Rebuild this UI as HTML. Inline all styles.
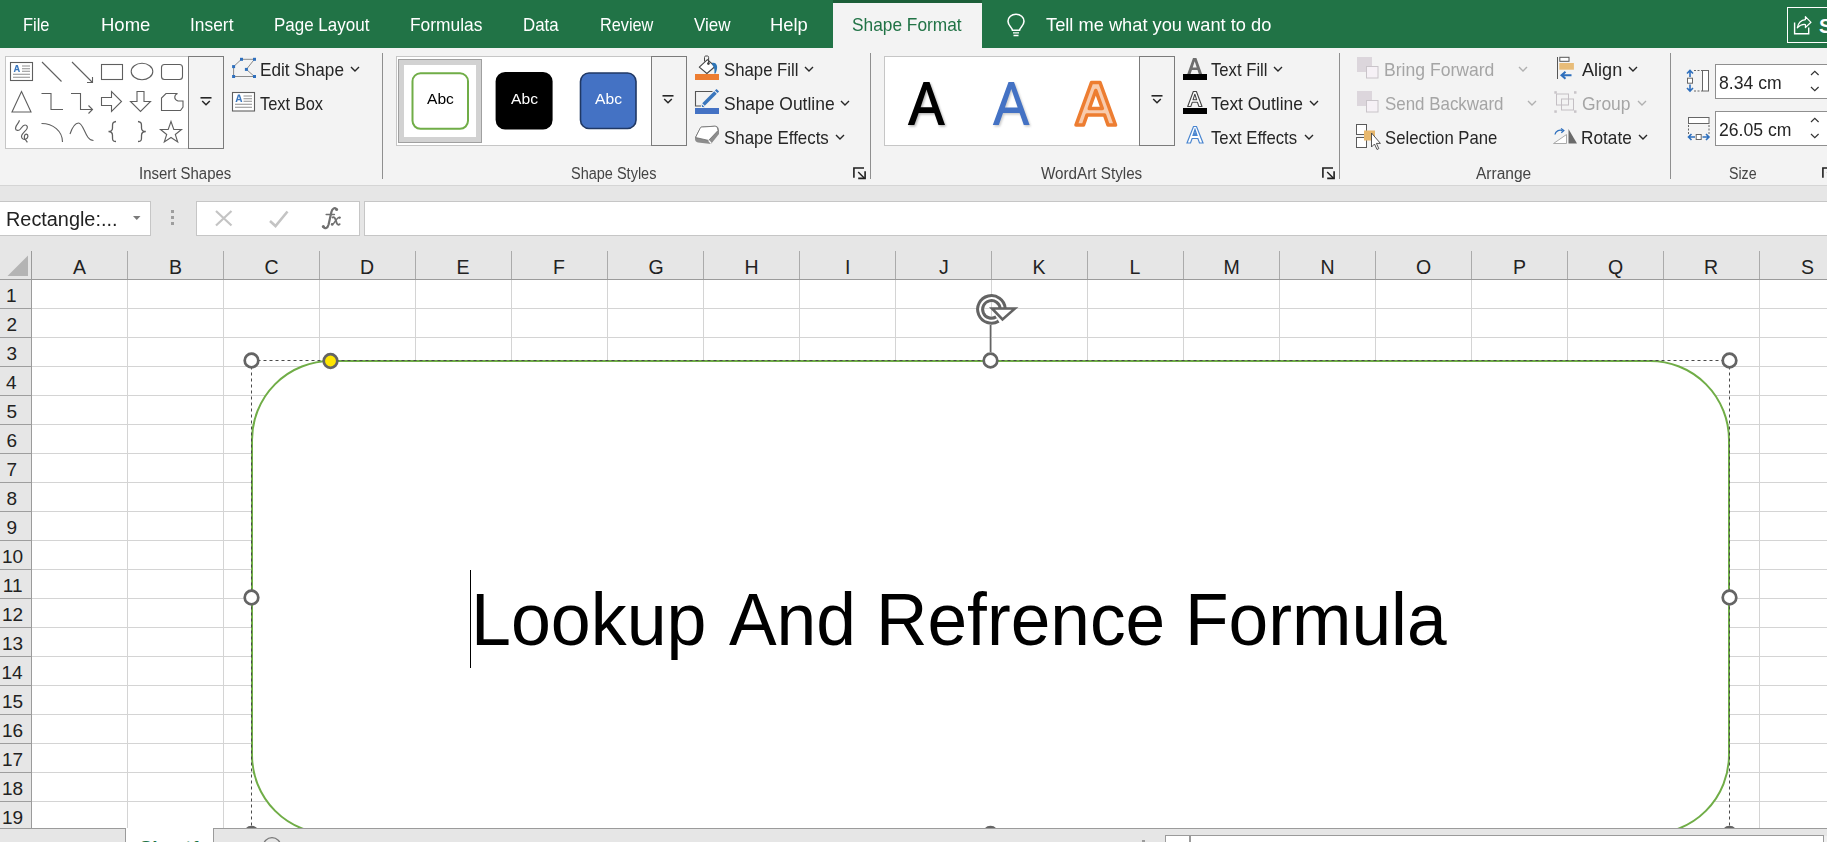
<!DOCTYPE html>
<html><head><meta charset="utf-8"><style>
html,body{margin:0;padding:0;}
body{width:1827px;height:842px;overflow:hidden;position:relative;background:#fff;font-family:"Liberation Sans", sans-serif;}
.a{position:absolute;box-sizing:border-box;}
.t{position:absolute;white-space:nowrap;transform-origin:0 0;}
svg{position:absolute;overflow:visible;}
</style></head><body>
<div class="a" style="left:0px;top:0px;width:1827px;height:48px;background:#217346"></div><div class="a" style="left:833px;top:0px;width:149px;height:3px;background:#1b5e38"></div><div class="a" style="left:833px;top:3px;width:149px;height:45px;background:#f3f3f3"></div><svg style="left:1000px;top:8px" width="32" height="34" viewBox="0 0 32 34"><g fill="none" stroke="#fff" stroke-width="1.6" transform="translate(0,3.6) scale(1,0.87)">
<path d="M12.5 21.5 C12 18 8 16 8 11 A8 8 0 0 1 24 11 C24 16 20 18 19.5 21.5 Z"/>
<path d="M13 24.5 H19 M13.5 27.5 H18.5"/></g></svg><div class="a" style="left:1787px;top:7px;width:60px;height:36px;border:1.3px solid #ffffff"></div><svg style="left:1790px;top:12px" width="28" height="26" viewBox="0 0 28 26"><g fill="none" stroke="#fff" stroke-width="1.4">
<path d="M4.6 10.5 V21.7 H18.7 V15.5"/>
<path d="M7.3 15.8 C8.3 10.5 11.5 8 15.4 7.6 V4.6 L21 10.3 L15.4 15.5 V12.5 C12 12 9.5 13.5 7.3 15.8 Z" stroke-width="1.2" stroke-linejoin="round"/></g></svg><div class="a" style="left:0px;top:48px;width:1827px;height:137px;background:#f3f3f3"></div><div class="a" style="left:0px;top:185px;width:1827px;height:1px;background:#d5d5d5"></div><div class="a" style="left:0px;top:186px;width:1827px;height:65px;background:#e6e6e6"></div><div class="a" style="left:382px;top:53px;width:1px;height:126px;background:#8f8f8f"></div><div class="a" style="left:870px;top:53px;width:1px;height:126px;background:#8f8f8f"></div><div class="a" style="left:1339px;top:53px;width:1px;height:126px;background:#8f8f8f"></div><div class="a" style="left:1670px;top:53px;width:1px;height:126px;background:#8f8f8f"></div><svg style="left:852.5px;top:167px" width="14" height="13" viewBox="0 0 14 13"><g fill="none" stroke="#1f1f1f" stroke-width="1.6"><path d="M0.9 10.7 V1 H11"/><path d="M5.2 4.9 L11.2 10.9" stroke-width="1.4"/><path d="M12.1 4.2 V11.4 H5.2"/></g></svg><svg style="left:1321.5px;top:167px" width="14" height="13" viewBox="0 0 14 13"><g fill="none" stroke="#1f1f1f" stroke-width="1.6"><path d="M0.9 10.7 V1 H11"/><path d="M5.2 4.9 L11.2 10.9" stroke-width="1.4"/><path d="M12.1 4.2 V11.4 H5.2"/></g></svg><svg style="left:1821.5px;top:167px" width="14" height="13" viewBox="0 0 14 13"><g fill="none" stroke="#1f1f1f" stroke-width="1.6"><path d="M0.9 10.7 V1 H11"/><path d="M5.2 4.9 L11.2 10.9" stroke-width="1.4"/><path d="M12.1 4.2 V11.4 H5.2"/></g></svg><div class="a" style="left:5px;top:56px;width:184px;height:93px;background:#fff;border:1px solid #c6c6c6;border-right:none"></div><div class="a" style="left:188px;top:56px;width:36px;height:93px;background:#f3f3f3;border:1px solid #7b7b7b"></div><svg style="left:199.5px;top:96.5px" width="12" height="10" viewBox="0 0 12 10"><rect x="0.5" y="0" width="11" height="1.6" fill="#262626"/><path d="M2.2 4 L6 7.8 L9.8 4" fill="none" stroke="#262626" stroke-width="1.5"/></svg><svg style="left:0px;top:0px" width="230" height="160" viewBox="0 0 230 160"><g fill="none" stroke="#5f5f5f" stroke-width="1.1">
<rect x="10.5" y="62.5" width="22" height="18"/>
<path d="M42 62 L61.5 81.5"/>
<path d="M72 62 L92.5 82.5 M92.5 77 V82.5 H87"/>
<rect x="101.5" y="64.5" width="21" height="15"/>
<ellipse cx="142" cy="71.5" rx="10.8" ry="8.2"/>
<rect x="161.5" y="64.5" width="21" height="15" rx="3"/>
<path d="M21.5 91.5 L31 112 H12 Z"/>
<path d="M41.5 93.5 H51 V109.5 H63"/>
<path d="M71 93.5 H80.5 V109.5 H92.5 M88.5 105.5 L92.5 109.5 L88.5 113.5"/>
<path d="M101.5 97.5 H111.5 V91.5 L121.5 101.5 L111.5 111.5 V105.5 H101.5 Z"/>
<path d="M137 91.5 H144 V101.5 H150.5 L140.5 111.5 L130.5 101.5 H137 Z"/>
<path d="M166 93.5 H177.5 C174 95 173.5 99.5 178 101 H183 V107 L180.5 110.5 H161.5 V98 Z"/>
<path d="M19.4 120.3 C19.4 123 15.5 125 15.5 128.2 C15.5 131 19 131 20.5 129 C22 127 23 125 25 125 C27.5 125 28 127.5 26.5 129.5 C25 131.5 21.5 134 21.5 136.5 C21.5 139 24 139.8 26 139 C28.5 138 28.5 134.5 26.3 134.2 C24.5 134 24 137 24.6 138.5 L27.4 142.4" stroke-width="1.2"/>
<path d="M41.5 123.5 C53 123.5 62.5 131 62.5 142"/>
<path d="M70 134 C72 128 75 123 78.5 123 C84 123 85 140.5 93.5 140.5"/>
<path d="M116 121.5 C112 122 112.5 124 112.5 128 C112.5 130.5 111 131.5 108.5 131.5 C111 131.5 112.5 132.5 112.5 135.5 C112.5 139.5 112 141.5 116 141.5" stroke-width="1.3"/>
<path d="M138 121.5 C142 122 141.5 124 141.5 128 C141.5 130.5 143 131.5 145.8 131.5 C143 131.5 141.5 132.5 141.5 135.5 C141.5 139.5 142 141.5 138 141.5" stroke-width="1.3"/>
<path d="M171 121.5 L173.8 129.5 L181.5 129.5 L175.3 134.5 L177.7 142 L171 137.5 L164.3 142 L166.7 134.5 L160.5 129.5 L168.2 129.5 Z"/>
</g>
<g stroke="#8f8f8f" stroke-width="1.1"><path d="M22 66 H30 M22 68.7 H30 M22 71.3 H30 M13 74.3 H30 M13 77.2 H30"/></g>
<path d="M13.7 72 L15.9 65 H17.8 L20 72 H18.5 L18 70.3 H15.7 L15.2 72 Z M16.1 69 H17.6 L16.85 66.5 Z" fill="#3a76bd"/></svg><svg style="left:228px;top:54px" width="32" height="30" viewBox="0 0 32 30"><g fill="none" stroke="#8a8a8a" stroke-width="1"><path d="M5.6 12.6 L13.4 5.3 H26.4 L18.4 15.4 L26.4 22.5 H5.6 Z"/></g>
<g fill="#2e6fbd"><rect x="12" y="3.8" width="3" height="3"/><rect x="25" y="3.8" width="3" height="3"/><rect x="4.1" y="11.1" width="3" height="3"/><rect x="16.9" y="13.9" width="3" height="3"/><rect x="4.1" y="21" width="3" height="3"/><rect x="25" y="21" width="3" height="3"/></g></svg><svg style="left:349.5px;top:66px" width="10" height="6" viewBox="0 0 10 6"><path d="M1 1 L5.0 5 L9 1" fill="none" stroke="#262626" stroke-width="1.4"/></svg><svg style="left:228px;top:88px" width="32" height="28" viewBox="0 0 32 28"><rect x="4.5" y="4.5" width="22" height="18.5" fill="#fff" stroke="#5f5f5f" stroke-width="1.1"/>
<g stroke="#8f8f8f" stroke-width="1.1"><path d="M15.5 8 H24 M15.5 10.7 H24 M15.5 13.3 H24 M7 16.3 H24 M7 19.2 H24"/></g>
<path d="M7.5 14 L9.9 6.5 H11.9 L14.3 14 H12.7 L12.2 12.2 H9.6 L9.1 14 Z M10 11 H11.8 L10.9 8 Z" fill="#3a76bd"/></svg><div class="a" style="left:396px;top:56px;width:256px;height:90px;background:#fff;border:1px solid #c6c6c6;border-right:none"></div><div class="a" style="left:651px;top:56px;width:36px;height:90px;background:#f3f3f3;border:1px solid #7b7b7b"></div><svg style="left:662px;top:95px" width="12" height="10" viewBox="0 0 12 10"><rect x="0.5" y="0" width="11" height="1.6" fill="#262626"/><path d="M2.2 4 L6 7.8 L9.8 4" fill="none" stroke="#262626" stroke-width="1.5"/></svg><div class="a" style="left:398px;top:59px;width:84px;height:84px;background:#fff;border:1px solid #a0a0a0;box-shadow:inset 0 0 0 5px #d2d2d2"></div><svg style="left:405px;top:66px" width="240" height="70" viewBox="0 0 240 70"><rect x="7.5" y="7.3" width="55.5" height="55.5" rx="8" fill="#fff" stroke="#70ad47" stroke-width="2"/>
<rect x="90.6" y="6" width="57" height="57.5" rx="9.5" fill="#000"/>
<rect x="175.5" y="7" width="55.5" height="55.5" rx="8.5" fill="#4472c4" stroke="#203864" stroke-width="1.6"/></svg><svg style="left:692px;top:52px" width="32" height="96" viewBox="0 0 32 96"><path d="M7.3 15.1 L15.4 7.6 L23 14.5 L14.9 21.5 Z" fill="#fff" stroke="#444" stroke-width="1.1" stroke-linejoin="round"/>
<path d="M12.5 9.5 V5.5 C12.5 4.5 13 4 14 4 H15.5 C16.3 4 16.6 4.5 16.6 5.5 V11" fill="none" stroke="#444" stroke-width="1"/><circle cx="16.4" cy="11.6" r="1.4" fill="#444"/>
<path d="M19.5 11 C22 10 24.5 11 25 14 C25.5 16.5 24.5 19 23.5 21.5 L22.3 21.5 C22.8 18.5 22.5 16 21 14 Z" fill="#2e75b6"/>
<rect x="3" y="22" width="24" height="6" fill="#ed7d31"/>
<path d="M3.5 54.5 V39.5 H20.5 M3.5 54 H9" fill="none" stroke="#555" stroke-width="1.1"/>
<path d="M11.5 52.5 L23.5 40.5" stroke="#3a76bd" stroke-width="3.6"/>
<path d="M24.2 39.8 L25.8 38.2" stroke="#3a76bd" stroke-width="3.6"/>
<path d="M9.7 52.3 L10 55 L12.7 55.3 Z" fill="#3a76bd"/>
<rect x="3" y="56" width="24" height="6" fill="#4472c4"/>
<path d="M3 85.5 L8 76 C8.5 75 9 74.5 10.5 74.5 L23 73.8 C24.5 73.8 25.5 74.5 26.5 76 L27 79 L27 82 L19 92 L6 90.5 C4 90 3 89 3 87 Z" fill="#8d8d8d"/>
<path d="M3.5 85.5 L8 76.5 C8.5 75.5 9 75 10.5 75 L22.5 74.2 C24 74.2 25 74.7 25.5 76 L26 78.5 L16.6 88.4 Z" fill="#fff" stroke="#6a6a6a" stroke-width="0.8" stroke-linejoin="round"/>
<path d="M16.6 88.4 L19.3 91.5" stroke="#fff" stroke-width="1.3"/></svg><svg style="left:803.5px;top:66px" width="10" height="6" viewBox="0 0 10 6"><path d="M1 1 L5.0 5 L9 1" fill="none" stroke="#262626" stroke-width="1.4"/></svg><svg style="left:839.5px;top:100px" width="10" height="6" viewBox="0 0 10 6"><path d="M1 1 L5.0 5 L9 1" fill="none" stroke="#262626" stroke-width="1.4"/></svg><svg style="left:834.5px;top:134px" width="10" height="6" viewBox="0 0 10 6"><path d="M1 1 L5.0 5 L9 1" fill="none" stroke="#262626" stroke-width="1.4"/></svg><div class="a" style="left:884px;top:56px;width:256px;height:90px;background:#fff;border:1px solid #c6c6c6;border-right:none"></div><div class="a" style="left:1139px;top:56px;width:36px;height:90px;background:#f3f3f3;border:1px solid #7b7b7b"></div><svg style="left:1150.5px;top:95px" width="12" height="10" viewBox="0 0 12 10"><rect x="0.5" y="0" width="11" height="1.6" fill="#262626"/><path d="M2.2 4 L6 7.8 L9.8 4" fill="none" stroke="#262626" stroke-width="1.5"/></svg><svg style="left:895px;top:70px" width="240" height="70" viewBox="0 0 240 70"><defs><filter id="sh" x="-20%" y="-20%" width="140%" height="140%"><feGaussianBlur stdDeviation="1"/></filter></defs>
<g transform="translate(1.2,1.5)" opacity="0.45" filter="url(#sh)"><path d="M12.8 55 L28.5 12 H34.5 L50 55 H43.5 L39.3 43 H23.7 L19.3 55 Z M25.6 37.3 H37.4 L31.5 19.5 Z" fill="#555"/></g>
<path d="M12.8 55 L28.5 12 H34.5 L50 55 H43.5 L39.3 43 H23.7 L19.3 55 Z M25.6 37.3 H37.4 L31.5 19.5 Z" fill="#000"/>
<g transform="translate(1.2,1.5)" opacity="0.35" filter="url(#sh)"><path d="M97.8 55 L113.5 12 H119 L134.6 55 H128.8 L124.6 43 H108 L103.8 55 Z M109.9 37.6 H122.7 L116.3 19 Z" fill="#666"/></g>
<path d="M97.8 55 L113.5 12 H119 L134.6 55 H128.8 L124.6 43 H108 L103.8 55 Z M109.9 37.6 H122.7 L116.3 19 Z" fill="#4472c4"/>
<path d="M181 55 L196.5 12.5 H205 L220.5 55 H213 L209.5 45 H192 L188.5 55 Z M194.3 38.5 H207.3 L200.8 20.5 Z" fill="#f8cbad" stroke="#ed7d31" stroke-width="3.6" stroke-linejoin="round"/></svg><svg style="left:1178px;top:54px" width="34" height="96" viewBox="0 0 34 96"><path d="M9.3 20 L15 4 H18.4 L24.1 20 H20.8 L19.5 16 H13.9 L12.6 20 Z M14.7 13.4 H18.7 L16.7 7.3 Z" fill="#6e6e6e"/>
<rect x="5" y="20" width="24" height="6" fill="#000"/>
<path d="M9.7 52.5 L15.3 37.5 H18.4 L24 52.5 H20.9 L19.5 48.3 H14.2 L12.8 52.5 Z M15 45.8 H18.7 L16.85 40.2 Z" fill="#fff" stroke="#444" stroke-width="1.1" stroke-linejoin="round"/>
<rect x="5" y="54" width="24" height="6" fill="#000"/>
<path d="M9 89 L15.5 72.5 H18.5 L25 89 H21.5 L19.9 84.5 H14.1 L12.5 89 Z M15 81.5 H19 L17 75.5 Z" fill="#fff" stroke="#4a86d0" stroke-width="1.2"/>
<path d="M15.6 81 L17 77 L18.4 81 Z" fill="#4a86d0"/></svg><svg style="left:1273px;top:66px" width="10" height="6" viewBox="0 0 10 6"><path d="M1 1 L5.0 5 L9 1" fill="none" stroke="#262626" stroke-width="1.4"/></svg><svg style="left:1308.5px;top:100px" width="10" height="6" viewBox="0 0 10 6"><path d="M1 1 L5.0 5 L9 1" fill="none" stroke="#262626" stroke-width="1.4"/></svg><svg style="left:1303.5px;top:134px" width="10" height="6" viewBox="0 0 10 6"><path d="M1 1 L5.0 5 L9 1" fill="none" stroke="#262626" stroke-width="1.4"/></svg><svg style="left:1350px;top:52px" width="36" height="100" viewBox="0 0 36 100"><rect x="7" y="5" width="15" height="15" fill="#dcd6dc"/>
<rect x="16.5" y="14.5" width="11.5" height="11.5" fill="#f6f1f6" stroke="#c9c4c9" stroke-width="1"/>
<rect x="7" y="39" width="15" height="15" fill="#dcd6dc"/>
<rect x="16.5" y="48.5" width="11.5" height="11.5" fill="#f6f1f6" stroke="#c9c4c9" stroke-width="1"/>
<rect x="6.5" y="72.5" width="10" height="10" fill="#fff" stroke="#5a5a5a" stroke-width="1"/>
<rect x="6.5" y="85.5" width="10" height="10" fill="#fff" stroke="#5a5a5a" stroke-width="1"/>
<rect x="14" y="78.5" width="11" height="10" fill="#e8b86d"/>
<path d="M21.5 81 V95 L24.5 92 L27 97.5 L28.8 96.6 L26.4 91.4 L30.4 91.4 Z" fill="#fff" stroke="#444" stroke-width="0.9"/></svg><svg style="left:1517.5px;top:66px" width="10" height="6" viewBox="0 0 10 6"><path d="M1 1 L5.0 5 L9 1" fill="none" stroke="#b0b0b0" stroke-width="1.4"/></svg><svg style="left:1526.5px;top:100px" width="10" height="6" viewBox="0 0 10 6"><path d="M1 1 L5.0 5 L9 1" fill="none" stroke="#b0b0b0" stroke-width="1.4"/></svg><svg style="left:1550px;top:52px" width="30" height="100" viewBox="0 0 30 100"><path d="M7.5 5 V27" stroke="#555" stroke-width="1"/>
<rect x="9.8" y="5.3" width="9.2" height="4" fill="#fff" stroke="#555" stroke-width="1"/>
<rect x="9.3" y="11" width="14.6" height="6.7" fill="#e8bc78"/>
<path d="M21.5 23.3 H12 M15.5 19.8 L11.5 23.3 L15.5 26.8" fill="none" stroke="#2e6fbd" stroke-width="2"/>
<g fill="none" stroke="#c4bfc4" stroke-width="1"><rect x="6.5" y="42" width="12" height="11"/><rect x="11.5" y="47" width="12" height="11"/></g>
<g fill="#c8c4c8"><rect x="4.3" y="39.2" width="2.5" height="2.5"/><rect x="24" y="39.2" width="2.5" height="2.5"/><rect x="4.3" y="58.3" width="2.5" height="2.5"/><rect x="24" y="58.3" width="2.5" height="2.5"/></g>
<path d="M3.5 91.5 L16.5 82.5 V91.5 Z" fill="#fff" stroke="#aaa" stroke-width="1"/>
<path d="M18.5 91.5 V77 L27 91.5 Z" fill="#6a6a6a"/>
<path d="M5 82.5 C5.5 79 9 77.5 12.5 78.5" fill="none" stroke="#2e6fbd" stroke-width="1.3"/><path d="M11 76.5 L13.8 78.6 L11.3 80.8" fill="none" stroke="#2e6fbd" stroke-width="1.3"/></svg><svg style="left:1628px;top:66px" width="10" height="6" viewBox="0 0 10 6"><path d="M1 1 L5.0 5 L9 1" fill="none" stroke="#262626" stroke-width="1.4"/></svg><svg style="left:1637px;top:100px" width="10" height="6" viewBox="0 0 10 6"><path d="M1 1 L5.0 5 L9 1" fill="none" stroke="#b0b0b0" stroke-width="1.4"/></svg><svg style="left:1638px;top:134px" width="10" height="6" viewBox="0 0 10 6"><path d="M1 1 L5.0 5 L9 1" fill="none" stroke="#262626" stroke-width="1.4"/></svg><svg style="left:1684px;top:66px" width="30" height="78" viewBox="0 0 30 78"><rect x="18.5" y="4.5" width="6" height="20.5" fill="#fff" stroke="#666" stroke-width="1"/>
<path d="M10 4.5 H18 M10 25 H18" stroke="#666" stroke-width="1" stroke-dasharray="2 1.5"/>
<rect x="3.5" y="12.2" width="5" height="5" fill="#fff" stroke="#666" stroke-width="1"/>
<path d="M6 4.5 V11 M6 18.5 V25 M3 7.5 L6 4.5 L9 7.5 M3 22 L6 25 L9 22" fill="none" stroke="#2e6fbd" stroke-width="1.6"/>
<rect x="4.5" y="51.5" width="20.5" height="6" fill="#fff" stroke="#666" stroke-width="1"/>
<path d="M4.5 59 V68 M25 59 V68" stroke="#666" stroke-width="1" stroke-dasharray="2 1.5"/>
<rect x="12.2" y="68.5" width="5" height="5" fill="#fff" stroke="#666" stroke-width="1"/>
<path d="M4.5 71 H11 M18.5 71 H25 M7.5 68 L4.5 71 L7.5 74 M22 68 L25 71 L22 74" fill="none" stroke="#2e6fbd" stroke-width="1.6"/></svg><div class="a" style="left:1715px;top:64px;width:140px;height:35px;background:#fff;border:1px solid #8f8f8f"></div><div class="a" style="left:1715px;top:111px;width:140px;height:35px;background:#fff;border:1px solid #8f8f8f"></div><svg style="left:1809px;top:70px" width="12" height="22" viewBox="0 0 12 22"><path d="M2 5 L5.8 1.3 L9.6 5 M2 17 L5.8 20.7 L9.6 17" fill="none" stroke="#333" stroke-width="1.2"/></svg><svg style="left:1809px;top:117px" width="12" height="22" viewBox="0 0 12 22"><path d="M2 5 L5.8 1.3 L9.6 5 M2 17 L5.8 20.7 L9.6 17" fill="none" stroke="#333" stroke-width="1.2"/></svg><div class="a" style="left:-1px;top:201px;width:152px;height:35px;background:#fff;border:1px solid #c6c6c6"></div><svg style="left:131px;top:214px" width="12" height="8" viewBox="0 0 12 8"><path d="M2 2 H9.5 L5.75 6 Z" fill="#7a7a7a"/></svg><div class="a" style="left:171px;top:210px;width:3px;height:3px;background:#9e9e9e"></div><div class="a" style="left:171px;top:216px;width:3px;height:3px;background:#9e9e9e"></div><div class="a" style="left:171px;top:222px;width:3px;height:3px;background:#9e9e9e"></div><div class="a" style="left:196px;top:201px;width:164px;height:35px;background:#fff;border:1px solid #c6c6c6"></div><svg style="left:210px;top:205px" width="140" height="30" viewBox="0 0 140 30"><path d="M6 6 L21.5 20.5 M21.5 6 L6 20.5" stroke="#c4c4c4" stroke-width="2.2"/>
<path d="M60 16 L65.5 21 L77.5 6.5" fill="none" stroke="#c4c4c4" stroke-width="2.6"/></svg><svg style="left:310px;top:200px" width="40" height="36" viewBox="0 0 40 36"><g transform="translate(-310,-200)" fill="none" stroke="#707070" stroke-linecap="round">
<path d="M323.5 227 C325 229 327.6 228.5 328.6 224.5 L331.4 212 C332.2 208.5 334.5 207.5 336.3 208.8" stroke-width="2.2"/>
<path d="M326.2 214.4 H334.4" stroke-width="1.5"/>
<path d="M332.6 217.4 C334.2 216.8 335 217.8 335.6 219.8 L336.8 223.2 C337.4 224.9 338.6 225 339.6 224.2" stroke-width="1.9"/>
<path d="M339.6 217.6 C338.4 217 337.4 218 336.2 219.8 L334 223 C333.2 224.4 332.4 224.6 331.6 224.2" stroke-width="1.5"/>
</g><g fill="#707070"><circle cx="26.6" cy="9.6" r="1.5"/><circle cx="13.3" cy="26.5" r="1.5"/><circle cx="29.6" cy="17.6" r="1.2"/><circle cx="22.2" cy="24.4" r="1.3"/></g></svg><div class="a" style="left:364px;top:201px;width:1480px;height:35px;background:#fff;border:1px solid #c6c6c6"></div><div class="a" style="left:0px;top:251px;width:1827px;height:28px;background:#e6e6e6"></div><div class="a" style="left:0px;top:279px;width:1827px;height:1px;background:#9b9b9b"></div><svg style="left:0px;top:250px" width="32" height="30" viewBox="0 0 32 30"><path d="M28 5.5 V26 H7.5 Z" fill="#b4b4b4"/></svg><div class="a" style="left:31px;top:251px;width:1px;height:28px;background:#9b9b9b"></div><div class="a" style="left:127px;top:251px;width:1px;height:28px;background:#ababab"></div><div class="a" style="left:223px;top:251px;width:1px;height:28px;background:#ababab"></div><div class="a" style="left:319px;top:251px;width:1px;height:28px;background:#ababab"></div><div class="a" style="left:415px;top:251px;width:1px;height:28px;background:#ababab"></div><div class="a" style="left:511px;top:251px;width:1px;height:28px;background:#ababab"></div><div class="a" style="left:607px;top:251px;width:1px;height:28px;background:#ababab"></div><div class="a" style="left:703px;top:251px;width:1px;height:28px;background:#ababab"></div><div class="a" style="left:799px;top:251px;width:1px;height:28px;background:#ababab"></div><div class="a" style="left:895px;top:251px;width:1px;height:28px;background:#ababab"></div><div class="a" style="left:991px;top:251px;width:1px;height:28px;background:#ababab"></div><div class="a" style="left:1087px;top:251px;width:1px;height:28px;background:#ababab"></div><div class="a" style="left:1183px;top:251px;width:1px;height:28px;background:#ababab"></div><div class="a" style="left:1279px;top:251px;width:1px;height:28px;background:#ababab"></div><div class="a" style="left:1375px;top:251px;width:1px;height:28px;background:#ababab"></div><div class="a" style="left:1471px;top:251px;width:1px;height:28px;background:#ababab"></div><div class="a" style="left:1567px;top:251px;width:1px;height:28px;background:#ababab"></div><div class="a" style="left:1663px;top:251px;width:1px;height:28px;background:#ababab"></div><div class="a" style="left:1759px;top:251px;width:1px;height:28px;background:#ababab"></div><div class="a" style="left:1855px;top:251px;width:1px;height:28px;background:#ababab"></div><div class="a" style="left:0px;top:280px;width:31px;height:548px;background:#e6e6e6"></div><div class="a" style="left:31px;top:251px;width:1px;height:577px;background:#9b9b9b"></div><div class="a" style="left:127px;top:280px;width:1px;height:548px;background:#d4d4d4"></div><div class="a" style="left:223px;top:280px;width:1px;height:548px;background:#d4d4d4"></div><div class="a" style="left:319px;top:280px;width:1px;height:548px;background:#d4d4d4"></div><div class="a" style="left:415px;top:280px;width:1px;height:548px;background:#d4d4d4"></div><div class="a" style="left:511px;top:280px;width:1px;height:548px;background:#d4d4d4"></div><div class="a" style="left:607px;top:280px;width:1px;height:548px;background:#d4d4d4"></div><div class="a" style="left:703px;top:280px;width:1px;height:548px;background:#d4d4d4"></div><div class="a" style="left:799px;top:280px;width:1px;height:548px;background:#d4d4d4"></div><div class="a" style="left:895px;top:280px;width:1px;height:548px;background:#d4d4d4"></div><div class="a" style="left:991px;top:280px;width:1px;height:548px;background:#d4d4d4"></div><div class="a" style="left:1087px;top:280px;width:1px;height:548px;background:#d4d4d4"></div><div class="a" style="left:1183px;top:280px;width:1px;height:548px;background:#d4d4d4"></div><div class="a" style="left:1279px;top:280px;width:1px;height:548px;background:#d4d4d4"></div><div class="a" style="left:1375px;top:280px;width:1px;height:548px;background:#d4d4d4"></div><div class="a" style="left:1471px;top:280px;width:1px;height:548px;background:#d4d4d4"></div><div class="a" style="left:1567px;top:280px;width:1px;height:548px;background:#d4d4d4"></div><div class="a" style="left:1663px;top:280px;width:1px;height:548px;background:#d4d4d4"></div><div class="a" style="left:1759px;top:280px;width:1px;height:548px;background:#d4d4d4"></div><div class="a" style="left:1855px;top:280px;width:1px;height:548px;background:#d4d4d4"></div><div class="a" style="left:32px;top:308px;width:1795px;height:1px;background:#d4d4d4"></div><div class="a" style="left:0px;top:308px;width:31px;height:1px;background:#9e9e9e"></div><div class="a" style="left:32px;top:337px;width:1795px;height:1px;background:#d4d4d4"></div><div class="a" style="left:0px;top:337px;width:31px;height:1px;background:#9e9e9e"></div><div class="a" style="left:32px;top:366px;width:1795px;height:1px;background:#d4d4d4"></div><div class="a" style="left:0px;top:366px;width:31px;height:1px;background:#9e9e9e"></div><div class="a" style="left:32px;top:395px;width:1795px;height:1px;background:#d4d4d4"></div><div class="a" style="left:0px;top:395px;width:31px;height:1px;background:#9e9e9e"></div><div class="a" style="left:32px;top:424px;width:1795px;height:1px;background:#d4d4d4"></div><div class="a" style="left:0px;top:424px;width:31px;height:1px;background:#9e9e9e"></div><div class="a" style="left:32px;top:453px;width:1795px;height:1px;background:#d4d4d4"></div><div class="a" style="left:0px;top:453px;width:31px;height:1px;background:#9e9e9e"></div><div class="a" style="left:32px;top:482px;width:1795px;height:1px;background:#d4d4d4"></div><div class="a" style="left:0px;top:482px;width:31px;height:1px;background:#9e9e9e"></div><div class="a" style="left:32px;top:511px;width:1795px;height:1px;background:#d4d4d4"></div><div class="a" style="left:0px;top:511px;width:31px;height:1px;background:#9e9e9e"></div><div class="a" style="left:32px;top:540px;width:1795px;height:1px;background:#d4d4d4"></div><div class="a" style="left:0px;top:540px;width:31px;height:1px;background:#9e9e9e"></div><div class="a" style="left:32px;top:569px;width:1795px;height:1px;background:#d4d4d4"></div><div class="a" style="left:0px;top:569px;width:31px;height:1px;background:#9e9e9e"></div><div class="a" style="left:32px;top:598px;width:1795px;height:1px;background:#d4d4d4"></div><div class="a" style="left:0px;top:598px;width:31px;height:1px;background:#9e9e9e"></div><div class="a" style="left:32px;top:627px;width:1795px;height:1px;background:#d4d4d4"></div><div class="a" style="left:0px;top:627px;width:31px;height:1px;background:#9e9e9e"></div><div class="a" style="left:32px;top:656px;width:1795px;height:1px;background:#d4d4d4"></div><div class="a" style="left:0px;top:656px;width:31px;height:1px;background:#9e9e9e"></div><div class="a" style="left:32px;top:685px;width:1795px;height:1px;background:#d4d4d4"></div><div class="a" style="left:0px;top:685px;width:31px;height:1px;background:#9e9e9e"></div><div class="a" style="left:32px;top:714px;width:1795px;height:1px;background:#d4d4d4"></div><div class="a" style="left:0px;top:714px;width:31px;height:1px;background:#9e9e9e"></div><div class="a" style="left:32px;top:743px;width:1795px;height:1px;background:#d4d4d4"></div><div class="a" style="left:0px;top:743px;width:31px;height:1px;background:#9e9e9e"></div><div class="a" style="left:32px;top:772px;width:1795px;height:1px;background:#d4d4d4"></div><div class="a" style="left:0px;top:772px;width:31px;height:1px;background:#9e9e9e"></div><div class="a" style="left:32px;top:801px;width:1795px;height:1px;background:#d4d4d4"></div><div class="a" style="left:0px;top:801px;width:31px;height:1px;background:#9e9e9e"></div><svg style="left:0px;top:0px" width="1827" height="842" viewBox="0 0 1827 842"><rect x="252" y="361" width="1477" height="473" rx="79" ry="79" fill="#fff" stroke="#70ad47" stroke-width="2"/></svg>
<div class="t gen" style="left:22.72px;top:15.01px;font-size:18.6px;line-height:20.776px;color:#ffffff;transform:scaleX(0.8840);">File</div>
<div class="t gen" style="left:100.81px;top:15.01px;font-size:18.6px;line-height:20.776px;color:#ffffff;transform:scaleX(0.9947);">Home</div>
<div class="t gen" style="left:189.57px;top:15.01px;font-size:18.6px;line-height:20.776px;color:#ffffff;transform:scaleX(0.9345);">Insert</div>
<div class="t gen" style="left:273.89px;top:15.01px;font-size:18.6px;line-height:20.776px;color:#ffffff;transform:scaleX(0.9132);">Page Layout</div>
<div class="t gen" style="left:409.97px;top:15.01px;font-size:18.6px;line-height:20.776px;color:#ffffff;transform:scaleX(0.9345);">Formulas</div>
<div class="t gen" style="left:522.79px;top:15.01px;font-size:18.6px;line-height:20.776px;color:#ffffff;transform:scaleX(0.9066);">Data</div>
<div class="t gen" style="left:600.12px;top:15.01px;font-size:18.6px;line-height:20.776px;color:#ffffff;transform:scaleX(0.8755);">Review</div>
<div class="t gen" style="left:694.00px;top:15.01px;font-size:18.6px;line-height:20.776px;color:#ffffff;transform:scaleX(0.9127);">View</div>
<div class="t gen" style="left:770.01px;top:15.01px;font-size:18.6px;line-height:20.776px;color:#ffffff;transform:scaleX(0.9892);">Help</div>
<div class="t gen" style="left:851.50px;top:15.01px;font-size:18.6px;line-height:20.776px;color:#217346;transform:scaleX(0.9305);">Shape Format</div>
<div class="t gen" style="left:1045.80px;top:15.01px;font-size:18.6px;line-height:20.776px;color:#ffffff;transform:scaleX(0.9821);">Tell me what you want to do</div>
<div class="t gen" style="left:1819.10px;top:15.01px;font-size:20px;line-height:22.34px;color:#ffffff;font-weight:bold;">S</div>
<div class="t gen" style="left:138.75px;top:165.01px;font-size:15.8px;line-height:17.649px;color:#444444;transform:scaleX(0.9464);">Insert Shapes</div>
<div class="t gen" style="left:570.50px;top:165.01px;font-size:15.8px;line-height:17.649px;color:#444444;transform:scaleX(0.9175);">Shape Styles</div>
<div class="t gen" style="left:1040.60px;top:165.01px;font-size:15.8px;line-height:17.649px;color:#444444;transform:scaleX(0.9634);">WordArt Styles</div>
<div class="t gen" style="left:1476.40px;top:165.01px;font-size:15.8px;line-height:17.649px;color:#444444;transform:scaleX(0.9820);">Arrange</div>
<div class="t gen" style="left:1728.50px;top:165.01px;font-size:15.8px;line-height:17.649px;color:#444444;transform:scaleX(0.8984);">Size</div>
<div class="t gen" style="left:260.38px;top:60.01px;font-size:18.6px;line-height:20.776px;color:#262626;transform:scaleX(0.9227);">Edit Shape</div>
<div class="t gen" style="left:260.30px;top:94.01px;font-size:18.6px;line-height:20.776px;color:#262626;transform:scaleX(0.8846);">Text Box</div>
<div class="t gen" style="left:426.60px;top:90.00px;font-size:15.5px;line-height:17.314px;color:#000;transform:scaleX(1.0052);">Abc</div>
<div class="t gen" style="left:510.50px;top:90.00px;font-size:15.5px;line-height:17.314px;color:#fff;transform:scaleX(1.0089);">Abc</div>
<div class="t gen" style="left:594.50px;top:90.00px;font-size:15.5px;line-height:17.314px;color:#fff;transform:scaleX(1.0089);">Abc</div>
<div class="t gen" style="left:723.70px;top:60.01px;font-size:18.6px;line-height:20.776px;color:#262626;transform:scaleX(0.9013);">Shape Fill</div>
<div class="t gen" style="left:723.70px;top:94.01px;font-size:18.6px;line-height:20.776px;color:#262626;transform:scaleX(0.9387);">Shape Outline</div>
<div class="t gen" style="left:723.70px;top:128.01px;font-size:18.6px;line-height:20.776px;color:#262626;transform:scaleX(0.9076);">Shape Effects</div>
<div class="t gen" style="left:1211.20px;top:60.01px;font-size:18.6px;line-height:20.776px;color:#262626;transform:scaleX(0.8968);">Text Fill</div>
<div class="t gen" style="left:1211.20px;top:94.01px;font-size:18.6px;line-height:20.776px;color:#262626;transform:scaleX(0.9362);">Text Outline</div>
<div class="t gen" style="left:1211.20px;top:128.01px;font-size:18.6px;line-height:20.776px;color:#262626;transform:scaleX(0.8987);">Text Effects</div>
<div class="t gen" style="left:1383.95px;top:60.01px;font-size:18.6px;line-height:20.776px;color:#a5a5a5;transform:scaleX(0.9452);">Bring Forward</div>
<div class="t gen" style="left:1384.90px;top:94.01px;font-size:18.6px;line-height:20.776px;color:#a5a5a5;transform:scaleX(0.9100);">Send Backward</div>
<div class="t gen" style="left:1384.90px;top:128.01px;font-size:18.6px;line-height:20.776px;color:#262626;transform:scaleX(0.8979);">Selection Pane</div>
<div class="t gen" style="left:1581.80px;top:60.01px;font-size:18.6px;line-height:20.776px;color:#262626;transform:scaleX(0.9731);">Align</div>
<div class="t gen" style="left:1581.80px;top:94.01px;font-size:18.6px;line-height:20.776px;color:#a5a5a5;transform:scaleX(0.9389);">Group</div>
<div class="t gen" style="left:1581.47px;top:128.01px;font-size:18.6px;line-height:20.776px;color:#262626;transform:scaleX(0.9262);">Rotate</div>
<div class="t gen" style="left:1718.60px;top:73.71px;font-size:17.8px;line-height:19.883px;color:#262626;transform:scaleX(0.9898);">8.34 cm</div>
<div class="t gen" style="left:1718.60px;top:120.80px;font-size:17.8px;line-height:19.883px;color:#262626;transform:scaleX(0.9913);">26.05 cm</div>
<div class="t gen" style="left:6.08px;top:209.01px;font-size:19.5px;line-height:21.782px;color:#222222;transform:scaleX(1.0181);">Rectangle:...</div>
<div class="t gen" style="left:73.10px;top:257.01px;font-size:19.5px;line-height:21.782px;color:#222222;">A</div>
<div class="t gen" style="left:169.10px;top:257.01px;font-size:19.5px;line-height:21.782px;color:#222222;">B</div>
<div class="t gen" style="left:264.60px;top:257.01px;font-size:19.5px;line-height:21.782px;color:#222222;">C</div>
<div class="t gen" style="left:360.10px;top:257.01px;font-size:19.5px;line-height:21.782px;color:#222222;">D</div>
<div class="t gen" style="left:456.60px;top:257.01px;font-size:19.5px;line-height:21.782px;color:#222222;">E</div>
<div class="t gen" style="left:553.10px;top:257.01px;font-size:19.5px;line-height:21.782px;color:#222222;">F</div>
<div class="t gen" style="left:648.60px;top:257.01px;font-size:19.5px;line-height:21.782px;color:#222222;">G</div>
<div class="t gen" style="left:744.60px;top:257.01px;font-size:19.5px;line-height:21.782px;color:#222222;">H</div>
<div class="t gen" style="left:845.10px;top:257.01px;font-size:19.5px;line-height:21.782px;color:#222222;">I</div>
<div class="t gen" style="left:939.10px;top:257.01px;font-size:19.5px;line-height:21.782px;color:#222222;">J</div>
<div class="t gen" style="left:1032.60px;top:257.01px;font-size:19.5px;line-height:21.782px;color:#222222;">K</div>
<div class="t gen" style="left:1129.60px;top:257.01px;font-size:19.5px;line-height:21.782px;color:#222222;">L</div>
<div class="t gen" style="left:1223.60px;top:257.01px;font-size:19.5px;line-height:21.782px;color:#222222;">M</div>
<div class="t gen" style="left:1320.60px;top:257.01px;font-size:19.5px;line-height:21.782px;color:#222222;">N</div>
<div class="t gen" style="left:1416.10px;top:257.01px;font-size:19.5px;line-height:21.782px;color:#222222;">O</div>
<div class="t gen" style="left:1513.10px;top:257.01px;font-size:19.5px;line-height:21.782px;color:#222222;">P</div>
<div class="t gen" style="left:1608.10px;top:257.01px;font-size:19.5px;line-height:21.782px;color:#222222;">Q</div>
<div class="t gen" style="left:1704.10px;top:257.01px;font-size:19.5px;line-height:21.782px;color:#222222;">R</div>
<div class="t gen" style="left:1801.10px;top:257.01px;font-size:19.5px;line-height:21.782px;color:#222222;">S</div>
<div class="t gen" style="left:5.90px;top:285.01px;font-size:19px;line-height:21.223px;color:#222222;">1</div>
<div class="t gen" style="left:6.40px;top:314.01px;font-size:19px;line-height:21.223px;color:#222222;">2</div>
<div class="t gen" style="left:6.40px;top:343.01px;font-size:19px;line-height:21.223px;color:#222222;">3</div>
<div class="t gen" style="left:5.90px;top:372.01px;font-size:19px;line-height:21.223px;color:#222222;">4</div>
<div class="t gen" style="left:6.40px;top:401.01px;font-size:19px;line-height:21.223px;color:#222222;">5</div>
<div class="t gen" style="left:6.40px;top:430.01px;font-size:19px;line-height:21.223px;color:#222222;">6</div>
<div class="t gen" style="left:6.40px;top:459.01px;font-size:19px;line-height:21.223px;color:#222222;">7</div>
<div class="t gen" style="left:6.40px;top:488.01px;font-size:19px;line-height:21.223px;color:#222222;">8</div>
<div class="t gen" style="left:6.40px;top:517.00px;font-size:19px;line-height:21.223px;color:#222222;">9</div>
<div class="t gen" style="left:2.02px;top:546.00px;font-size:19px;line-height:21.223px;color:#222222;">10</div>
<div class="t gen" style="left:2.72px;top:575.00px;font-size:19px;line-height:21.223px;color:#222222;">11</div>
<div class="t gen" style="left:2.02px;top:604.00px;font-size:19px;line-height:21.223px;color:#222222;">12</div>
<div class="t gen" style="left:2.02px;top:633.00px;font-size:19px;line-height:21.223px;color:#222222;">13</div>
<div class="t gen" style="left:1.52px;top:662.00px;font-size:19px;line-height:21.223px;color:#222222;">14</div>
<div class="t gen" style="left:2.02px;top:691.00px;font-size:19px;line-height:21.223px;color:#222222;">15</div>
<div class="t gen" style="left:2.02px;top:720.00px;font-size:19px;line-height:21.223px;color:#222222;">16</div>
<div class="t gen" style="left:2.02px;top:749.00px;font-size:19px;line-height:21.223px;color:#222222;">17</div>
<div class="t gen" style="left:2.02px;top:778.00px;font-size:19px;line-height:21.223px;color:#222222;">18</div>
<div class="t gen" style="left:2.02px;top:807.00px;font-size:19px;line-height:21.223px;color:#222222;">19</div>
<div class="t gen" style="left:471.48px;top:579.01px;font-size:74px;line-height:82.658px;color:#000000;transform:scaleX(0.9701);">Lookup</div>
<div class="t gen" style="left:728.50px;top:579.01px;font-size:74px;line-height:82.658px;color:#000000;transform:scaleX(0.9646);">And</div>
<div class="t gen" style="left:876.22px;top:579.01px;font-size:74px;line-height:82.658px;color:#000000;transform:scaleX(0.9632);">Refrence</div>
<div class="t gen" style="left:1185.42px;top:579.01px;font-size:74px;line-height:82.658px;color:#000000;transform:scaleX(0.9638);">Formula</div>
<svg style="left:0px;top:0px" width="1827" height="842" viewBox="0 0 1827 842"><g fill="none" stroke="#4a4a4a" stroke-width="1" stroke-dasharray="3 3">
<path d="M251.5 360.5 H1729.5 M251.5 360.5 V842 M1729.5 360.5 V842"/></g>
<path d="M990.5 325 V352" stroke="#646464" stroke-width="1.6"/>
<g fill="#fff" stroke="#646464" stroke-width="2.7">
<circle cx="251.5" cy="360.5" r="6.8"/><circle cx="990.5" cy="360.5" r="6.8"/><circle cx="1729.5" cy="360.5" r="6.8"/>
<circle cx="251.5" cy="597.5" r="6.8"/><circle cx="1729.5" cy="597.5" r="6.8"/>
<circle cx="251.5" cy="834" r="6.8"/><circle cx="990.5" cy="834" r="6.8"/><circle cx="1729.5" cy="834" r="6.8"/></g>
<circle cx="330.5" cy="361" r="6.8" fill="#ffe600" stroke="#646464" stroke-width="2.7"/>
<g transform="translate(991.5,309.5)">
<path d="M5.9 9.5 A11.3 11.3 0 1 1 11.2 -1" fill="none" stroke="#646464" stroke-width="8"/>
<path d="M5.9 9.5 A11.3 11.3 0 1 1 11.2 -1" fill="none" stroke="#fff" stroke-width="2"/>
<path d="M0.5 -1 H23.5 L11 10 Z" fill="#fff" stroke="#646464" stroke-width="2.6" stroke-linejoin="miter"/>
</g>
<path d="M470.5 570 V668" stroke="#000" stroke-width="1"/></svg><div class="a" style="left:0;top:828px;width:1827px;height:14px;background:#e6e6e6"></div><div class="a" style="left:0;top:828px;width:126px;height:1px;background:#9b9b9b"></div><div class="a" style="left:213px;top:828px;width:1614px;height:1px;background:#9b9b9b"></div><div class="a" style="left:125px;top:828px;width:1px;height:14px;background:#9b9b9b"></div><div class="a" style="left:126px;top:828px;width:87px;height:14px;background:#fff"></div><div class="a" style="left:213px;top:828px;width:1px;height:14px;background:#9b9b9b"></div><div class="t" style="left:139.5px;top:837px;font-size:19px;line-height:21px;font-weight:bold;color:#217346">Sheet1</div><svg style="left:260px;top:836px" width="24" height="10"><circle cx="12" cy="10.5" r="8.8" fill="none" stroke="#777" stroke-width="1.2"/></svg><div class="a" style="left:1142px;top:840px;width:3px;height:3px;background:#9b9b9b"></div><div class="a" style="left:1165px;top:835px;width:659px;height:10px;background:#fff;border:1px solid #9b9b9b;border-bottom:none"></div><div class="a" style="left:1189px;top:835px;width:1.5px;height:8px;background:#9b9b9b"></div><div class="a" style="left:1824px;top:836px;width:3px;height:6px;background:#f0f0f0"></div>
</body></html>
